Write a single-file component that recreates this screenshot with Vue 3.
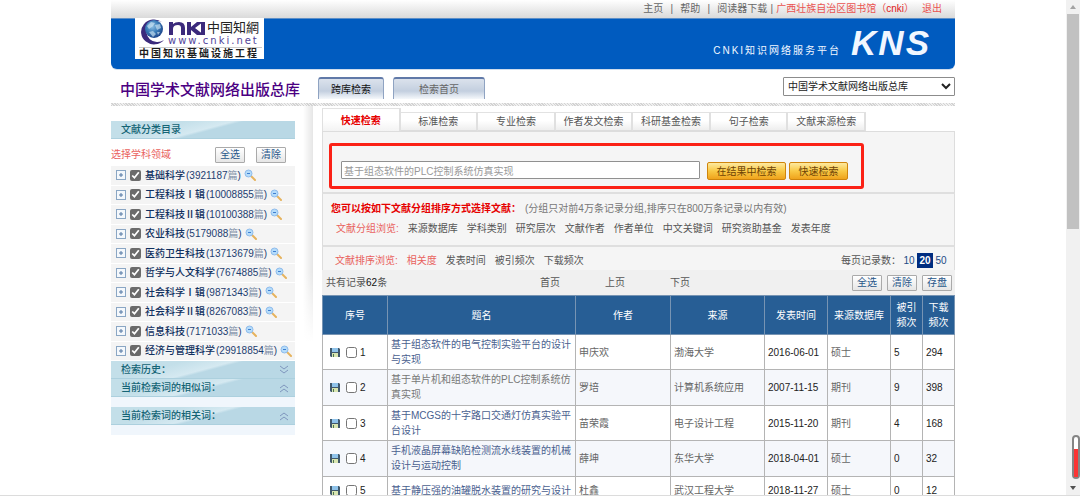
<script setup>
import { ref } from 'vue'

const keyword = ref('基于组态软件的PLC控制系统仿真实现')
const tabs = ['快速检索', '标准检索', '专业检索', '作者发文检索', '科研基金检索', '句子检索', '文献来源检索']
const subjects = ref([
  { name: '基础科学', count: '3921187', on: true },
  { name: '工程科技Ⅰ辑', count: '10008855', on: true },
  { name: '工程科技Ⅱ辑', count: '10100388', on: true },
  { name: '农业科技', count: '5179088', on: true },
  { name: '医药卫生科技', count: '13713679', on: true },
  { name: '哲学与人文科学', count: '7674885', on: true },
  { name: '社会科学Ⅰ辑', count: '9871343', on: true },
  { name: '社会科学Ⅱ辑', count: '8267083', on: true },
  { name: '信息科技', count: '7171033', on: true },
  { name: '经济与管理科学', count: '29918854', on: true }
])
const groups = ['来源数据库', '学科类别', '研究层次', '文献作者', '作者单位', '中文关键词', '研究资助基金', '发表年度']
const sorts = ['相关度', '发表时间', '被引频次', '下载频次']
const rows = [
  { title: '基于组态软件的电气控制实验平台的设计与实现', author: '申庆欢', source: '渤海大学', date: '2016-06-01', db: '硕士', cited: 5, down: 294 },
  { title: '基于单片机和组态软件的PLC控制系统仿真实现', author: '罗培', source: '计算机系统应用', date: '2007-11-15', db: '期刊', cited: 9, down: 398, visited: true },
  { title: '基于MCGS的十字路口交通灯仿真实验平台设计', author: '苗荣霞', source: '电子设计工程', date: '2015-11-20', db: '期刊', cited: 4, down: 168 },
  { title: '手机液晶屏幕缺陷检测流水线装置的机械设计与运动控制', author: '薛坤', source: '东华大学', date: '2018-04-01', db: '硕士', cited: 0, down: 32 },
  { title: '基于静压强的油罐脱水装置的研究与设计', author: '杜鑫', source: '武汉工程大学', date: '2018-11-27', db: '硕士', cited: 0, down: 12 }
]
</script>

<template>
  <div class="window">
    <div class="page">
      <div class="wrap">
        <nav class="topbar">
          <a href="#">主页</a><span class="bar">|</span><a href="#">帮助</a><span class="bar">|</span><a href="#">阅读器下载</a><span class="bar tight">|</span><a href="#" class="red">广西壮族自治区图书馆（<b>cnki</b>）</a><a href="#" class="red exit">退出</a>
        </nav>
        <header class="banner">
          <svg class="logo" width="129" height="41" viewBox="0 0 129 41" role="img" aria-label="CNKI 中国知网">
            <defs>
              <radialGradient id="globe" cx="0.4" cy="0.35" r="0.7">
                <stop offset="0" stop-color="#8fc0e4" />
                <stop offset="0.5" stop-color="#3a7cb8" />
                <stop offset="1" stop-color="#1b3f86" />
              </radialGradient>
            </defs>
            <rect width="129" height="41" fill="#fff" />
            <path d="M27 4 A13 12.500 0 1 0 29 22 A11 10.500 0 1 1 27 4Z" fill="#3b2a7c" />
            <circle cx="19" cy="11" r="9" fill="url(#globe)" />
            <path d="M12 8l4-4 4 1-2 3-4 3zM20 7l5-1 1 4-4 2zM14 14l4-1 3 3-3 3zM22 14l3 0-2 3z" fill="#cfe6f5" opacity=".65" />
            <path d="M34 17V4h4v2q2-2 6-2 6 0 6 6v7h-4v-7q0-3-3-3-5 0-5 4v6zM52 4h4v13h-4zM62 4h6l-8 6 9 7h-7l-6-5v-3z" fill="#3b2a7c" />
            <rect x="66" y="4" width="4" height="13" fill="#3b2a7c" />
            <text x="72" y="14" class="logo-hand">中国知網</text>
            <text x="33" y="26" class="logo-url">www.cnki.net</text>
            <path d="M4 29.500H127" stroke="#ccc" />
            <text x="4" y="39" class="logo-sub">中国知识基础设施工程</text>
          </svg>
          <div class="slogan">CNKI知识网络服务平台</div>
          <div class="kns">KNS</div>
        </header>
        <div class="titlebar">
          <h1>中国学术文献网络出版总库</h1>
          <button class="nav on">跨库检索</button>
          <button class="nav wide">检索首页</button>
          <select aria-label="选择数据库"><option>中国学术文献网络出版总库</option></select>
        </div>
        <div class="hatch"></div>

        <div class="columns">
          <aside>
            <h2 class="side-head first">文献分类目录</h2>
            <div class="choose">
              <span>选择学科领域</span>
              <button class="grey">全选</button>
              <button class="grey">清除</button>
            </div>
            <ul>
              <li v-for="s in subjects" :key="s.name">
                <svg class="plus" width="10" height="10" viewBox="0 0 10 10"><rect x=".5" y=".5" width="9" height="9" fill="#f4f8fc" stroke="#8aa6c4" /><path d="M3 5h4M5 3v4" stroke="#5578a4" /></svg>
                <label><input v-model="s.on" type="checkbox"><span><b>{{ s.name }}</b>({{ s.count }}<i>篇</i>)</span></label>
                <svg class="mag" width="12" height="12" viewBox="0 0 12 12"><path d="M7 7l4 4" stroke="#e6b35e" stroke-width="2" stroke-linecap="round" /><circle cx="4.500" cy="4.500" r="3.500" fill="#b5dcfa" stroke="#8fbcec" /><path d="M3 4.500h3" stroke="#3f7fd0" /></svg>
              </li>
            </ul>
            <h2 class="side-head">检索历史：<svg width="10" height="10" viewBox="0 0 10 10"><path d="M1 1l4 3 4-3M1 5l4 3 4-3" /></svg></h2>
            <h2 class="side-head">当前检索词的相似词：<svg width="10" height="10" viewBox="0 0 10 10"><path d="M1 5l4-3 4 3M1 9l4-3 4 3" /></svg></h2>
            <div class="pale"></div>
            <h2 class="side-head">当前检索词的相关词：<svg width="10" height="10" viewBox="0 0 10 10"><path d="M1 5l4-3 4 3M1 9l4-3 4 3" /></svg></h2>
            <div class="pale"></div>
          </aside>
          <div class="divider"></div>

          <main>
            <div class="tabs">
              <button v-for="(t, i) in tabs" :key="t" :class="{ active: i === 0 }">{{ t }}</button>
            </div>
            <section class="panel search-panel">
              <form class="search" @submit.prevent>
                <input v-model="keyword" type="text" aria-label="检索词">
                <button class="gold long">在结果中检索</button>
                <button class="gold">快速检索</button>
              </form>
            </section>
            <section class="panel group-panel">
              <p><strong>您可以按如下文献分组排序方式选择文献：</strong>(分组只对前4万条记录分组,排序只在800万条记录以内有效)</p>
              <div class="links">
                <span class="lead">文献分组浏览:</span>
                <a v-for="g in groups" :key="g" href="#">{{ g }}</a>
              </div>
            </section>
            <section class="panel sort-panel">
              <div class="links">
                <span class="lead">文献排序浏览:</span>
                <a v-for="(g, i) in sorts" :key="g" href="#" :class="{ lead: i === 0 }">{{ g }}</a>
              </div>
              <div class="sizes">每页记录数：<a href="#">10</a><a href="#" class="cur">20</a><a href="#">50</a></div>
            </section>
            <section class="pager">
              <span class="total">共有记录<b>62</b>条</span>
              <div class="pages"><a href="#">首页</a><a href="#">上页</a><a href="#">下页</a></div>
              <div class="acts">
                <button class="grey">全选</button>
                <button class="grey">清除</button>
                <button class="grey">存盘</button>
              </div>
            </section>
            <table>
              <colgroup><col class="c-no"><col><col class="c-author"><col class="c-source"><col class="c-date"><col class="c-date"><col class="c-num"><col class="c-num"></colgroup>
              <thead>
                <tr><th>序号</th><th>题名</th><th>作者</th><th>来源</th><th>发表时间</th><th>来源数据库</th><th>被引<br>频次</th><th>下载<br>频次</th></tr>
              </thead>
              <tbody>
                <tr v-for="(r, i) in rows" :key="r.title">
                  <td>
                    <div class="no">
                      <svg width="10" height="10" viewBox="0 0 10 10"><path d="M0 1h9l1 1v8H1L0 9z" fill="#40586b" /><rect x="2" y="1" width="6" height="4" fill="#8fc3ea" /><rect x="2" y="6" width="6" height="4" fill="#d9e6b0" /><rect x="3" y="7" width="1" height="3" fill="#4d7352" /></svg>
                      <label><input type="checkbox"><span>{{ i + 1 }}</span></label>
                    </div>
                  </td>
                  <td><a href="#" :class="{ visited: r.visited }">{{ r.title }}</a></td>
                  <td class="soft">{{ r.author }}</td>
                  <td class="soft">{{ r.source }}</td>
                  <td>{{ r.date }}</td>
                  <td class="soft">{{ r.db }}</td>
                  <td>{{ r.cited }}</td>
                  <td>{{ r.down }}</td>
                </tr>
              </tbody>
            </table>
          </main>
        </div>
      </div>
    </div>
    <div class="scroll">
      <svg width="8" height="14" viewBox="0 0 8 14"><path d="M1 9h6L4 5z" fill="#a3a3a3" /></svg>
      <div class="thumb"></div>
      <svg class="down" width="8" height="14" viewBox="0 0 8 14"><path d="M1 5h6L4 9z" fill="#505050" /></svg>
      <div class="gauge"><div></div></div>
    </div>
  </div>
</template>

<style>
body { margin: 0; overflow: hidden; }
</style>

<style scoped>
.window {
  display: flex;
  height: 100vh;
  box-sizing: border-box;
  overflow: hidden;
  border-bottom: 1px solid #dcdcdc;
  background: #fff;
  font: 10px/15px "Liberation Sans", "Noto Sans CJK SC", sans-serif;
  color: #333;
}
button, input, select { font: inherit; margin: 0; box-sizing: border-box; }
button { padding: 0; white-space: nowrap; }
a { color: inherit; text-decoration: none; }
h1, h2, p, ul { margin: 0; padding: 0; }
.page { flex: 1; min-width: 0; }
.wrap { max-width: 844px; margin: 0 auto; }

.topbar {
  display: flex;
  justify-content: flex-end;
  height: 18px;
  padding-right: 13px;
  line-height: 18px;
  color: #666;
  background: linear-gradient(#fff, #dadada);
}
.bar { width: 17px; text-align: center; }
.bar.tight { width: 9px; }
.red { color: #ea5350; }
.red b { font-weight: 400; color: #e01818; }
.exit { margin-left: 8px; }

.banner {
  display: flex;
  height: 51px;
  box-sizing: border-box;
  padding: 0 24px;
  border-top: 1px solid #5d8fc8;
  border-radius: 0 0 6px 6px;
  box-shadow: 0 1px 0 #cfdcec;
  background: #005bbf;
  color: #f1f7ff;
}
.logo { margin-top: -1px; }
.logo-hand { font: 13px "Noto Sans CJK SC", sans-serif; fill: #222; }
.logo-url { font: 10px "DejaVu Sans", sans-serif; letter-spacing: 2px; fill: #51449a; }
.logo-sub { font: bold 10px "Noto Sans CJK SC", sans-serif; letter-spacing: 2px; fill: #1c1c1c; }
.slogan { margin: 24px 10px 0 auto; letter-spacing: 2px; }
.kns { font: italic bold 35px/47px "Liberation Sans", sans-serif; letter-spacing: 2px; }

.titlebar { display: flex; height: 34px; padding-left: 9px; }
h1 { width: 198px; font-size: 15px; font-weight: 500; line-height: 42px; color: #4b0082; white-space: nowrap; }
.nav {
  width: 66px;
  height: 22px;
  margin: 8px 9px 0 0;
  border: 1px solid #8fa3c2;
  border-top: 2px solid #6079a8;
  border-bottom: 0;
  border-radius: 3px 3px 0 0;
  background: linear-gradient(#dbe2ec, #c3cfdf 60%, #f5f8fb);
  color: #666;
}
.nav.on { color: #111; }
.nav.wide { width: 92px; }
select {
  width: 172px;
  height: 19px;
  margin: 8px 0 0 auto;
  padding: 0;
  border: 1px solid #8c8c8c;
  border-radius: 1px;
  background: #fff;
  color: #222;
}
.hatch { height: 3px; background: repeating-linear-gradient(45deg, #d3d3d3 0 1px, #f0f0f0 1px 2px); }

.columns { display: flex; }
aside { width: 184px; padding-top: 15px; }
.side-head {
  display: flex;
  align-items: center;
  justify-content: space-between;
  height: 18px;
  box-sizing: border-box;
  padding: 0 6px 0 10px;
  border-bottom: 1px solid #acd0de;
  background: linear-gradient(165deg, #c3dfe9 0 30%, #d5e9f1 50%, #b9d8e5 54%);
  font-size: 10px;
  font-weight: 500;
  line-height: 16px;
  color: #156475;
}
.side-head.first { margin-bottom: 8px; }
.side-head svg { fill: none; stroke: #7f96bd; }
.choose { display: flex; align-items: flex-start; gap: 11px; height: 19px; color: #e9625e; }
.choose span { width: 93px; }
.grey {
  flex: none;
  width: 30px;
  height: 16px;
  border: 1px solid #aaa;
  border-radius: 1px;
  background: linear-gradient(#fff, #e6e6e6);
  color: #285689;
  line-height: 14px;
}
ul { display: grid; grid-auto-rows: 1fr; height: 195px; list-style: none; }
li {
  display: flex;
  align-items: center;
  padding-left: 5px;
  border-bottom: 1px solid #fff;
  background: #f4f4f4;
  color: #1d3d70;
  white-space: nowrap;
}
li label { display: flex; align-items: center; margin-left: 4px; }
li input { width: 11px; height: 11px; margin-right: 4px; accent-color: #6b6b6b; }
li b { margin-right: 1px; font-weight: 500; color: #10305f; }
li i { font-style: normal; color: #8090a8; }
.mag { margin-left: 3px; }
.pale { height: 10px; background: #f0f6fc; }
.divider { width: 10px; height: 236px; margin: 0 9px 0 8px; background: linear-gradient(#fff0 70%, #fff), linear-gradient(90deg, #fff, #e6e6e6); }

main { flex: 1; min-width: 0; }
.tabs { display: flex; align-items: flex-end; height: 25px; max-width: 544px; }
.tabs button {
  flex: 1;
  height: 19px;
  border: 0;
  border-top: 1px solid #e2e2e2;
  border-right: 2px solid #e0e0e0;
  border-bottom: 1px solid #ddd;
  background: linear-gradient(#fff 45%, #eee);
  color: #555;
}
.tabs .active {
  height: 23px;
  border-left: 1px solid #e0e0e0;
  border-bottom: 0;
  background: linear-gradient(#fff 50%, #f3f3f3);
  font-weight: 700;
  color: #e60000;
}
.panel {
  box-sizing: border-box;
  border: 1px solid #ddd;
  border-top: 0;
  border-bottom: 2px solid #dfdfdf;
  background: #f5f5f5;
}
.search-panel { height: 63px; padding: 12px 90px 0 6px; box-shadow: inset 0 1px 0 #ddd; }
.search {
  display: flex;
  align-items: center;
  height: 46px;
  box-sizing: border-box;
  padding: 8px 13px 0 9px;
  border: 3px solid #fb2116;
  border-radius: 3px;
}
.search input {
  flex: 1;
  min-width: 0;
  height: 18px;
  margin-right: 7px;
  padding: 0 2px;
  border: 1px solid #909090;
  border-radius: 1px;
  background: #fff;
  color: #999;
}
.gold {
  width: 59px;
  height: 18px;
  margin-top: 2px;
  border: 1px solid #cf850d;
  border-radius: 2px;
  background: linear-gradient(#fde9a0, #f9c945 50%, #efa31c);
  color: #6d4205;
}
.gold.long { width: 79px; margin-right: 3px; }
.group-panel { height: 53px; padding: 7px 0 0 8px; color: #777; }
.group-panel .links { padding: 5px 0 0 5px; }
strong { margin-right: 4px; color: #e60000; }
.links { display: flex; gap: 9px; color: #555; }
.lead { color: #e9625e; }
.sort-panel { display: flex; align-items: center; justify-content: space-between; height: 23px; padding: 3px 5px 0 12px; border-bottom: 0; }
.sizes { display: flex; color: #555; }
.sizes a { width: 16px; text-align: center; color: #234b86; }
.sizes .cur { background: #002d80; color: #fff; font-weight: 700; }
.pager { display: grid; grid-template-columns: 214px 1fr auto; align-items: center; height: 25px; padding: 0 3px 0 4px; background: #f0f0f0; color: #555; }
.total b { font-weight: 400; color: #111; }
.pages { display: flex; gap: 45px; }
.acts { display: flex; gap: 5px; }

table { width: 100%; table-layout: fixed; border-collapse: collapse; }
.c-no { width: 65px; }
.c-author { width: 95px; }
.c-source { width: 94px; }
.c-date { width: 63px; }
.c-num { width: 32px; }
th { height: 39px; padding: 0; border: 1px solid #7794b3; background: #275e95; color: #fff; font-weight: 400; box-sizing: border-box; }
td { height: 27px; padding: 2px 3px; border: 1px solid #b4b4b4; box-sizing: border-box; color: #222; }
tbody tr:nth-child(even) td { padding-bottom: 3px; background: #f5f7fb; }
td a { color: #4a5f8f; }
td a.visited { color: #777; }
.soft { color: #666; }
.no { display: flex; align-items: center; gap: 6px; padding-left: 4px; }
.no label { display: flex; align-items: center; gap: 3px; }
.no input { width: 11px; height: 11px; }

.scroll { position: relative; display: flex; flex-direction: column; align-items: center; width: 14px; background: #f1f1f1; }
.thumb { width: 12px; height: 215px; background: #c1c1c1; }
.down { margin-top: auto; }
.gauge {
  position: absolute;
  right: 0;
  bottom: 16px;
  display: flex;
  align-items: flex-end;
  width: 8px;
  height: 44px;
  box-sizing: border-box;
  border: 2px solid #858585;
  border-radius: 4px;
  background: #fff;
}
.gauge div { width: 100%; height: 70%; background: #fb3434; }
</style>
